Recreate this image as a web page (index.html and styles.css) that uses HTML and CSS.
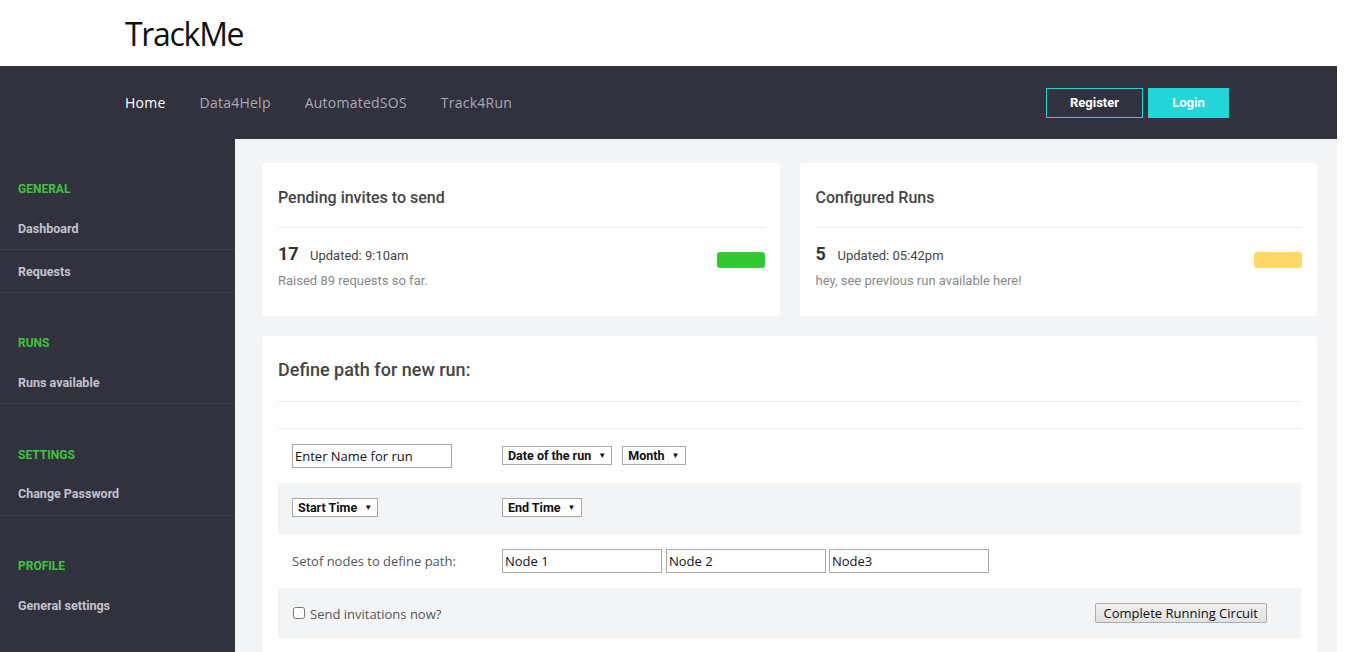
FILE: index.html
```html
<!DOCTYPE html>
<html lang="en">
<head>
<meta charset="utf-8">
<title>TrackMe</title>
<link rel="stylesheet" href="styles.css">
</head>
<body>
<div class="page">
  <header class="brand">
    <h1 class="logo">TrackMe</h1>
  </header>
  <nav class="topnav">
    <ul class="menu">
      <li class="menu-item active">Home</li>
      <li class="menu-item">Data4Help</li>
      <li class="menu-item">AutomatedSOS</li>
      <li class="menu-item">Track4Run</li>
    </ul>
    <div class="auth">
      <a class="btn btn-outline">Register</a>
      <a class="btn btn-fill">Login</a>
    </div>
  </nav>
  <div class="layout">
    <aside class="sidebar">
      <section class="side-section">
        <h3 class="side-title">GENERAL</h3>
        <a class="side-link">Dashboard</a>
        <a class="side-link">Requests</a>
      </section>
      <section class="side-section">
        <h3 class="side-title">RUNS</h3>
        <a class="side-link">Runs available</a>
      </section>
      <section class="side-section">
        <h3 class="side-title">SETTINGS</h3>
        <a class="side-link">Change Password</a>
      </section>
      <section class="side-section">
        <h3 class="side-title">PROFILE</h3>
        <a class="side-link last">General settings</a>
      </section>
    </aside>
    <main class="content">
      <div class="cards">
        <div class="card">
          <h2 class="card-title">Pending invites to send</h2>
          <div class="card-body">
            <div class="stat">
              <div class="stat-line"><span class="stat-num">17</span><span class="stat-upd">Updated: 9:10am</span></div>
              <div class="stat-note">Raised 89 requests so far.</div>
            </div>
            <span class="pill pill-green"></span>
          </div>
        </div>
        <div class="card">
          <h2 class="card-title">Configured Runs</h2>
          <div class="card-body">
            <div class="stat">
              <div class="stat-line"><span class="stat-num">5</span><span class="stat-upd">Updated: 05:42pm</span></div>
              <div class="stat-note">hey, see previous run available here!</div>
            </div>
            <span class="pill pill-yellow"></span>
          </div>
        </div>
      </div>
      <div class="panel">
        <h2 class="panel-title">Define path for new run:</h2>
        <div class="panel-gap"></div>
        <div class="form">
          <div class="row row-1">
            <div class="cell c1"><input class="field name" type="text" value="Enter Name for run"></div>
            <div class="cell c2">
              <span class="sel">Date of the run <span class="arr">▼</span></span>
              <span class="sel">Month <span class="arr">▼</span></span>
            </div>
          </div>
          <div class="row row-2 alt">
            <div class="cell c1"><span class="sel">Start Time <span class="arr">▼</span></span></div>
            <div class="cell c2"><span class="sel">End Time <span class="arr">▼</span></span></div>
          </div>
          <div class="row row-3">
            <div class="cell c1"><span class="label">Setof nodes to define path:</span></div>
            <div class="cell c2 nodes">
              <input class="field node" type="text" value="Node 1">
              <input class="field node" type="text" value="Node 2">
              <input class="field node" type="text" value="Node3">
            </div>
          </div>
          <div class="row row-4 alt">
            <label class="check"><input type="checkbox" class="cb"><span class="label">Send invitations now?</span></label>
            <button class="submit" type="button">Complete Running Circuit</button>
          </div>
        </div>
      </div>
    </main>
  </div>
</div>
</body>
</html>
```
FILE: styles.css
```css
* { box-sizing: border-box; }
html, body { margin: 0; padding: 0; background: #fff; }
body { font-family: "Open Sans", "Noto Sans", sans-serif; overflow: hidden; }

.page { width: 1337px; height: 652px; display: flex; flex-direction: column; }

.brand { height: 66px; padding-left: 125px; display: flex; align-items: center; }
.logo { margin: 0; font-weight: 400; font-size: 32px; color: #111; letter-spacing: -1.3px; line-height: 1; padding-top: 1px; }

.topnav { height: 73px; background: #32323e; display: flex; align-items: center; padding-left: 125px; padding-right: 108px; }
.menu { list-style: none; margin: 0; padding: 0; display: flex; gap: 34px; }
.menu-item { font-size: 14px; color: #a9a9b6; letter-spacing: 0.24px; }
.menu-item.active { color: #fff; }
.auth { margin-left: auto; display: flex; gap: 5px; }
.btn { height: 30px; display: flex; align-items: center; justify-content: center; font-family: Roboto, sans-serif; font-weight: 700; font-size: 13px; color: #fff; }
.btn-outline { width: 97px; border: 1px solid #24d4d8; }
.btn-fill { width: 81px; background: #24d5d8; }

.layout { flex: 1; display: flex; min-height: 0; }
.sidebar { width: 235px; background: #32323e; font-family: Roboto, sans-serif; }
.side-section { margin-top: 30.4px; }
.side-section:first-child { margin-top: 30px; }
.side-title { margin: 0; height: 38px; display: flex; align-items: center; padding-left: 18px; padding-top: 2px; color: #3fc23f; font-size: 12px; font-weight: 700; }
.side-link { display: flex; align-items: center; height: 43px; padding-left: 18px; color: #c3c3cc; font-size: 12.5px; font-weight: 700; border-bottom: 1px solid #3f3f4b; }
.side-link.last { border-bottom-color: transparent; }

.content { flex: 1; background: #f3f4f6; padding: 24px 20px 0 27px; font-family: Roboto, sans-serif; }
.cards { display: flex; gap: 20px; }
.card { flex: 1; background: #fff; border-radius: 3px; height: 153px; padding: 0 15px 0 16px; }
.card-title { margin: 0; height: 65px; border-bottom: 1px solid #ebedf0; display: flex; align-items: center; padding-top: 4px; font-size: 16px; font-weight: 500; color: #444; }
.card-body { display: flex; justify-content: space-between; align-items: flex-start; padding-top: 15px; }
.stat-line { display: flex; align-items: baseline; }
.stat-num { font-size: 18px; font-weight: 700; color: #333; width: 32px; }
.card + .card .stat-num { width: 22px; }
.stat-upd { font-size: 13px; color: #444; }
.stat-note { font-size: 13px; color: #888; margin-top: 9px; }
.pill { width: 48px; height: 16px; border-radius: 3px; margin-top: 9px; }
.pill-green { background: #32c832; }
.pill-yellow { background: #ffd966; }

.panel { margin-top: 20px; background: #fff; border-radius: 3px 3px 0 0; padding: 0 16px 0 16px; height: 400px; }
.panel-title { margin: 0; height: 66px; border-bottom: 1px solid #ebedf0; display: flex; align-items: center; padding-top: 2px; font-size: 18px; font-weight: 500; color: #444; }
.panel-gap { height: 27px; border-bottom: 1px solid #ebedf0; }
.form { font-family: "Open Sans", sans-serif; }
.row { display: flex; align-items: center; padding-left: 14px; }
.row-1 { height: 54px; }
.row-2 { height: 51px; }
.row-3 { height: 54px; }
.row-4 { height: 50px; }
.alt { background: #f3f4f6; }
.cell.c1 { width: 210px; display: flex; align-items: center; }
.cell.c2 { display: flex; gap: 10px; align-items: center; }
.nodes { gap: 4px !important; }
.field { font-family: "Open Sans", sans-serif; font-size: 13px; color: #111; border: 1px solid #a9a9a9; background: #fff; padding: 0 2px; margin: 0; outline: none; }
.name { width: 160px; height: 24px; }
.node { width: 160px; height: 24px; }
.nodes .node:nth-child(3) { margin-left: -1px; }
.sel { display: inline-flex; align-items: center; height: 19px; margin-bottom: 2px; padding: 0 5px 0 5px; border: 1px solid #a9a9a9; background: #fff; font-family: Roboto, sans-serif; font-size: 12.5px; font-weight: 700; color: #111; white-space: pre; }
.arr { font-size: 8px; margin-left: 4px; }
.label { font-size: 13px; color: #555; }
.check { display: flex; align-items: center; padding-top: 2px; }
.cb { margin: 0 5px 2px 1px; width: 12px; height: 12px; }
.submit { margin-left: auto; margin-right: 34px; height: 20px; padding: 0 8px; font-family: "Open Sans", sans-serif; font-size: 13px; color: #111; border: 1px solid #adadad; border-radius: 2px; background: linear-gradient(#f0f0f0, #e1e1e1); }
```
